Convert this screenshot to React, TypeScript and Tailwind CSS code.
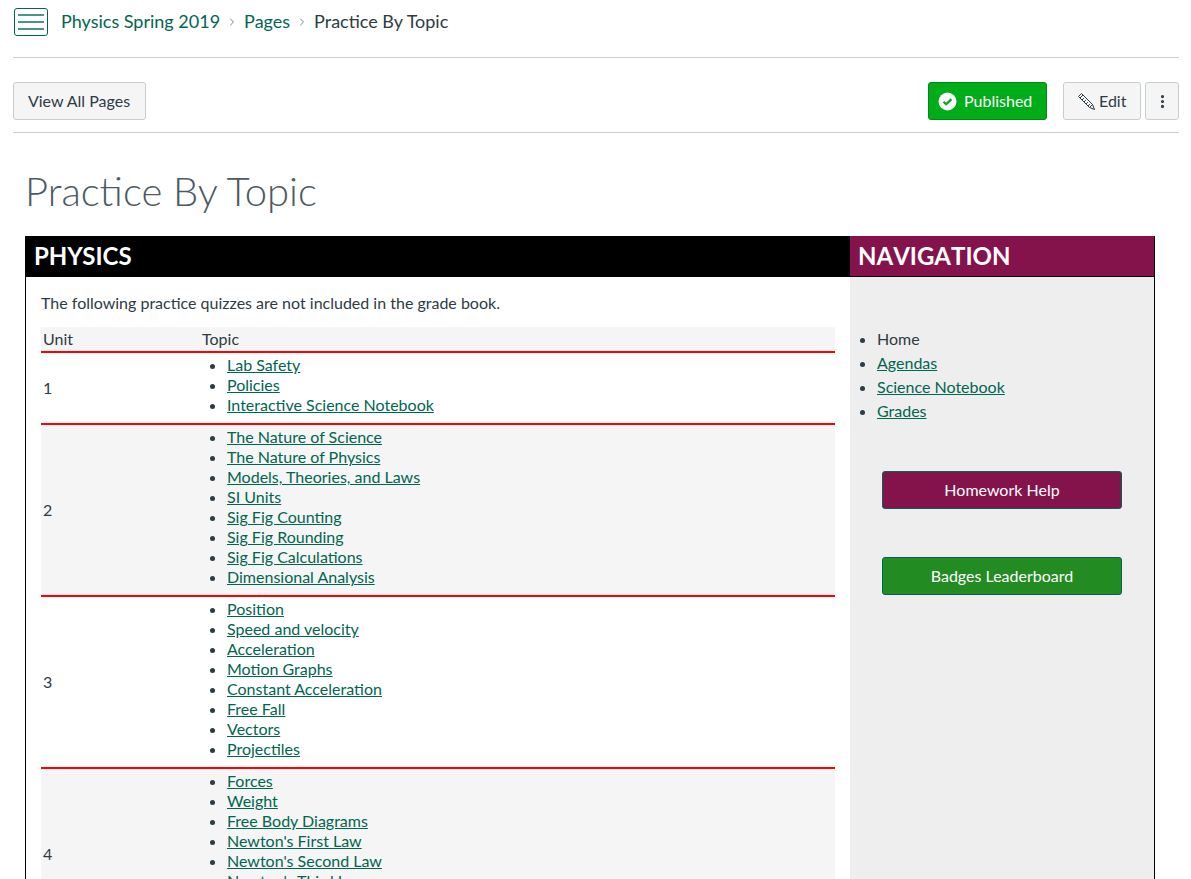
import { ChevronRight, EllipsisVertical } from 'lucide-react';

const link = 'text-[#00664f] underline';

const units = [
  { unit: '1', h: 'h-[72px]', bg: 'bg-white', topics: ['Lab Safety', 'Policies', 'Interactive Science Notebook'] },
  {
    unit: '2',
    h: 'h-[172px]',
    bg: 'bg-[#f5f5f5]',
    topics: ['The Nature of Science', 'The Nature of Physics', 'Models, Theories, and Laws', 'SI Units', 'Sig Fig Counting', 'Sig Fig Rounding', 'Sig Fig Calculations', 'Dimensional Analysis'],
  },
  {
    unit: '3',
    h: 'h-[172px]',
    bg: 'bg-white',
    topics: ['Position', 'Speed and velocity', 'Acceleration', 'Motion Graphs', 'Constant Acceleration', 'Free Fall', 'Vectors', 'Projectiles'],
  },
  {
    unit: '4',
    h: 'h-[172px]',
    bg: 'bg-[#f5f5f5]',
    topics: ['Forces', 'Weight', 'Free Body Diagrams', "Newton's First Law", "Newton's Second Law", "Newton's Third Law", 'Friction', 'Tension'],
  },
];

const navLinks = ['Agendas', 'Science Notebook', 'Grades'];

function Breadcrumbs() {
  return (
    <div className="flex h-[58px] items-start border-b border-[#c7cdd1]">
      <button className="mt-2 ml-px flex h-[28px] w-[34px] flex-col items-center justify-center gap-[5px] rounded-[3px] border border-[#00664f]">
        <span className="h-[2px] w-[26px] bg-[#4d9484]" />
        <span className="h-[2px] w-[26px] bg-[#4d9484]" />
        <span className="h-[2px] w-[26px] bg-[#4d9484]" />
      </button>
      <div className="ml-[13px] flex h-[43px] items-center text-[18px] text-[#00664f]">
        <span>Physics Spring 2019</span>
        <ChevronRight size={12} className="mx-[6px] text-[#73818c]" />
        <span>Pages</span>
        <ChevronRight size={12} className="mx-[6px] text-[#73818c]" />
        <span className="text-[#2d3b45]">Practice By Topic</span>
      </div>
    </div>
  );
}

function Toolbar() {
  return (
    <div className="flex h-[75px] items-start border-b border-[#c7cdd1] pt-[24px]">
      <button className="h-[38px] w-[133px] rounded-[3px] border border-[#c7cdd1] bg-[#f5f5f5] pr-[1px] text-[#2d3b45]">View All Pages</button>
      <div className="ml-auto flex">
        <button className="flex h-[38px] w-[119px] items-center rounded-[3px] border border-[#008a13] bg-[#00ac18] pl-[9px] text-white">
          <svg width="19" height="19" viewBox="0 0 19 19">
            <circle cx="9.5" cy="9.5" r="9" fill="#fff" />
            <path d="M5.5 9.8 8.2 12.3 13.4 7.1" fill="none" stroke="#00ac18" strokeWidth="2.2" />
          </svg>
          <span className="ml-[7px]">Published</span>
        </button>
        <button className="ml-4 flex h-[38px] w-[78px] items-center rounded-[3px] border border-[#c7cdd1] bg-[#f5f5f5] pl-[13px] text-[#2d3b45]">
          <svg width="19" height="19" viewBox="0 0 19 19" fill="none" stroke="#2d3b45" strokeWidth="1">
            <path d="M1.5 4.5 4.5 1.5 15.5 12.5 17.5 17.5 12.5 15.5Z" />
            <path d="M3 6 6 3M5 8 6.8 6.2M7 10 8.8 8.2M9 12 10.8 10.2M11 14 12.8 12.2M12.5 15.5 15.5 12.5" />
          </svg>
          <span className="ml-[3px]">Edit</span>
        </button>
        <button className="ml-1 flex h-[38px] w-[34px] items-center justify-center rounded-[3px] border border-[#c7cdd1] bg-[#f5f5f5] text-[#2d3b45]">
          <EllipsisVertical size={17} strokeWidth={2.5} />
        </button>
      </div>
    </div>
  );
}

function TopicTable() {
  return (
    <div className="w-[794px]">
      <div className="flex h-[24px] items-center bg-[#f5f5f5]">
        <span className="w-[161px] pl-[2px]">Unit</span>
        <span>Topic</span>
      </div>
      {units.map((row) => (
        <div key={row.unit} className={`flex items-center border-t-2 border-[#ff0000] ${row.h} ${row.bg}`}>
          <span className="w-[161px] pl-[2px]">{row.unit}</span>
          <ul className="list-disc pb-[6px] pl-[25px] leading-[20px]">
            {row.topics.map((topic) => (
              <li key={topic}>
                <a className={link}>{topic}</a>
              </li>
            ))}
          </ul>
        </div>
      ))}
    </div>
  );
}

export default function App() {
  return (
    <div className="h-[879px] overflow-hidden bg-white px-3 font-['Lato','Liberation_Sans',sans-serif] text-[16px] text-[#2d3b45]">
      <div className="ml-px w-[1166px]">
        <Breadcrumbs />
        <Toolbar />
        <h1 className="mt-[31px] ml-3 h-[72px] text-[40px] leading-[54px] font-light text-[#4d5a63]">Practice By Topic</h1>

        <div className="ml-3 flex w-[1130px] border-x border-black">
          {/* main column */}
          <div className="w-[824px]">
            <h2 className="h-[41px] bg-black pl-2 text-[24px] leading-[40px] font-bold text-white">PHYSICS</h2>
            <div className="pt-[16px] pl-[15px]">
              <p className="mb-[14px] leading-[20px]">The following practice quizzes are not included in the grade book.</p>
              <TopicTable />
            </div>
          </div>

          {/* sidebar */}
          <div className="w-[304px]">
            <h2 className="h-[41px] border-b border-black bg-[#84134b] pl-2 text-[24px] leading-[40px] font-bold text-white [font-kerning:none]">NAVIGATION</h2>
            <div className="h-[640px] bg-[#eeeeee] pt-[50px]">
              <ul className="list-disc pl-[27px] leading-[24px]">
                <li>Home</li>
                {navLinks.map((name) => (
                  <li key={name}>
                    <a className={link}>{name}</a>
                  </li>
                ))}
              </ul>
              <div className="mt-[48px] ml-[32px] flex flex-col gap-[48px]">
                <button className="h-[38px] w-[240px] rounded-[3px] border border-[#00664f] bg-[#84134b] text-white">Homework Help</button>
                <button className="h-[38px] w-[240px] rounded-[3px] border border-[#00664f] bg-[#228b22] text-white">Badges Leaderboard</button>
              </div>
            </div>
          </div>
        </div>
      </div>
    </div>
  );
}
